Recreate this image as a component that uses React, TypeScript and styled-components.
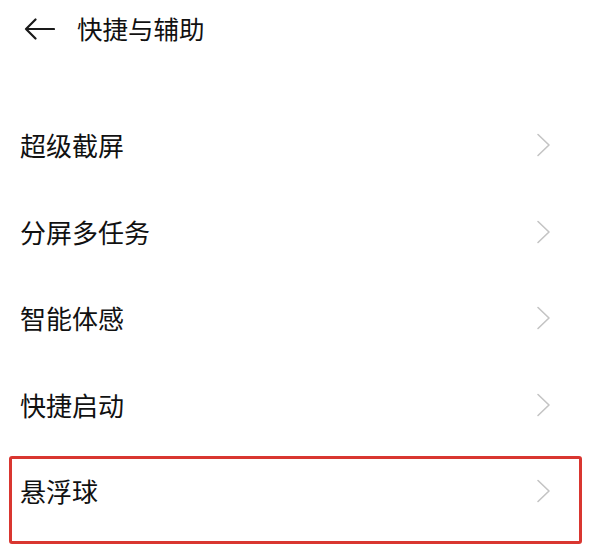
import React from 'react'
import styled, { createGlobalStyle } from 'styled-components'

const GlobalStyle = createGlobalStyle`
  html, body {
    margin: 0;
    padding: 0;
    background: #ffffff;
  }
  body {
    font-family: "Noto Sans CJK SC", "Noto Sans", sans-serif;
    color: #1a1a1a;
  }
`

const items = ['超级截屏', '分屏多任务', '智能体感', '快捷启动', '悬浮球']

const App: React.FC = () => {
  return (
    <Page>
      <GlobalStyle />
      <Header>
        <BackButton aria-label="back">
          <svg width="31" height="22" viewBox="0 0 31 22" fill="none">
            <path d="M30 11H2M11.5 1.5L2 11L11.5 20.5" stroke="#1a1a1a" strokeWidth="2.2" strokeLinecap="round" strokeLinejoin="round" />
          </svg>
        </BackButton>
        <Title>快捷与辅助</Title>
      </Header>
      <List>
        {items.map((label, i) => (
          <Row key={label} highlighted={i === items.length - 1}>
            <Label>{label}</Label>
            <Chevron width="15" height="24" viewBox="0 0 15 24" fill="none">
              <path d="M2 1.5L13 12L2 22.5" stroke="#c4c4c4" strokeWidth="1.6" strokeLinecap="round" strokeLinejoin="round" />
            </Chevron>
          </Row>
        ))}
      </List>
    </Page>
  )
}

const Page = styled.div`
  width: 590px;
  height: 557px;
  overflow: hidden;
  background: #ffffff;
`

const Header = styled.div`
  display: flex;
  align-items: center;
  height: 58px;
  padding-left: 24px;
`

const BackButton = styled.div`
  display: flex;
  align-items: center;
  width: 31px;
  height: 22px;
  margin-right: 22px;
`

const Title = styled.div`
  font-size: 25.5px;
  font-weight: 400;
  line-height: 1;
  margin-top: -3px;
  color: #111111;
`

const List = styled.div`
  display: flex;
  flex-direction: column;
  margin-top: 44px;
`

const Row = styled.div.withConfig({
  shouldForwardProp: (prop) => prop !== 'highlighted',
})<{ highlighted?: boolean }>`
  position: relative;
  display: flex;
  align-items: center;
  justify-content: space-between;
  height: 86.5px;
  padding: 0 39px 0 20px;

  ${({ highlighted }) =>
    highlighted &&
    `
    &::after {
      content: '';
      position: absolute;
      top: 8px;
      left: 9px;
      right: 8px;
      height: 88px;
      box-sizing: border-box;
      border: 3px solid #d93630;
      border-radius: 3px;
      pointer-events: none;
    }
  `}
`

const Label = styled.span`
  font-size: 26px;
  line-height: 1;
  color: #111111;
`

const Chevron = styled.svg`
  display: block;
`

export default App
